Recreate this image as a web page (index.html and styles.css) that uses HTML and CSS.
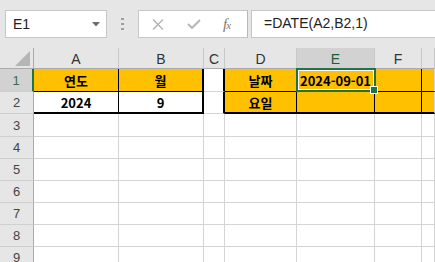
FILE: index.html
```html
<!DOCTYPE html>
<html lang="ko">
<head>
  <meta charset="UTF-8" />
  <title>DATE 함수</title>
  <link rel="stylesheet" href="styles.css">
</head>
<body>

  <div class="toolbar">
    <div class="namebox">
      <span>E1</span>
      <svg class="arrow" width="8" height="5" viewBox="0 0 8 5"><path d="M0 0h8L4 4.5z" fill="#6b6b6b"/></svg>
    </div>
    <div class="grip">
      <svg width="3" height="12" viewBox="0 0 3 12"><rect x="0" y="0" width="3" height="2" fill="#a0a0a0"/><rect x="0" y="5" width="3" height="2" fill="#a0a0a0"/><rect x="0" y="10" width="3" height="2" fill="#a0a0a0"/></svg>
    </div>
    <div class="fxbox">
      <svg class="ico-x" width="12" height="11" viewBox="0 0 12 11"><path d="M1 0.5l10 10M11 0.5l-10 10" stroke="#b3b3b3" stroke-width="1.4" fill="none"/></svg>
      <svg class="ico-ok" width="14" height="10" viewBox="0 0 14 10"><path d="M1 5l4 4 8-8" stroke="#b3b3b3" stroke-width="1.8" fill="none"/></svg>
      <span class="fx">f<sub>x</sub></span>
    </div>
    <div class="formula">=DATE(A2,B2,1)</div>
  </div>

  <div class="sheet">
    <!-- column headers -->
    <div class="corner"><svg width="15" height="15" viewBox="0 0 15 15"><path d="M15 0V15H0z" fill="#b5b5b5"/></svg></div>
    <div class="colhead">A</div>
    <div class="colhead">B</div>
    <div class="colhead">C</div>
    <div class="colhead">D</div>
    <div class="colhead active">E</div>
    <div class="colhead">F</div>
    <div class="colhead"></div>

    <!-- row 1 -->
    <div class="rowhead active">1</div>
    <div class="cell fill line-r line-b">연도</div>
    <div class="cell fill thick-r line-b">월</div>
    <div class="cell thick-r"></div>
    <div class="cell fill line-r line-b">날짜</div>
    <div class="cell fill line-r line-b current">2024-09-01<span class="select"><span class="handle"></span></span></div>
    <div class="cell fill line-r line-b"></div>
    <div class="cell fill line-b"></div>

    <!-- row 2 -->
    <div class="rowhead">2</div>
    <div class="cell line-r thick-b">2024</div>
    <div class="cell thick-r thick-b">9</div>
    <div class="cell thick-r"></div>
    <div class="cell fill line-r thick-b">요일</div>
    <div class="cell fill line-r thick-b"></div>
    <div class="cell fill line-r thick-b"></div>
    <div class="cell fill thick-b"></div>
  </div>

  <div class="sheet rest" id="rest"></div>

  <script>
    // empty rows 3..9
    const rest = document.getElementById('rest');
    let html = '';
    for (let r = 3; r <= 9; r++) {
      html += `<div class="rowhead">${r}</div>`;
      for (let c = 0; c < 7; c++) html += '<div class="cell"></div>';
    }
    rest.innerHTML = html;
  </script>
</body>
</html>
```

FILE: styles.css
```css
body {
  margin: 0;
  background: #fff;
  font-family: "Liberation Sans", "Noto Sans CJK KR", sans-serif;
  overflow: hidden;
}
.toolbar {
  background: #e6e6e6;
  height: 48px;
  box-sizing: border-box;
  padding: 10px 0 0 5px;
  display: flex;
  align-items: flex-start;
}
.namebox {
  width: 102px;
  height: 28px;
  box-sizing: border-box;
  background: #fff;
  border: 1px solid #c6c6c6;
  display: flex;
  align-items: center;
  justify-content: space-between;
  padding: 0 6px 0 7px;
  font-size: 14px;
  color: #222;
}
.namebox .arrow {
  margin-top: 1px;
}
.grip {
  width: 31px;
  height: 28px;
  display: flex;
  align-items: center;
  justify-content: center;
}
.fxbox {
  width: 110px;
  height: 28px;
  box-sizing: border-box;
  background: #fff;
  border: 1px solid #c6c6c6;
  border-right-color: #b8b8b8;
  display: flex;
  align-items: center;
  padding-left: 13px;
}
.ico-ok {
  margin-left: 23px;
}
.fx {
  margin-left: 22px;
  font-family: "Liberation Serif", serif;
  font-style: italic;
  font-size: 15px;
  color: #777;
}
.fx sub {
  font-size: 11px;
  vertical-align: 0;
  margin-left: -1px;
}
.formula {
  flex: 1;
  height: 28px;
  box-sizing: border-box;
  margin-left: 3px;
  background: #fff;
  border: 1px solid #c6c6c6;
  border-right: none;
  padding: 4px 0 0 12px;
  font-size: 14px;
  color: #222;
}

.sheet {
  display: grid;
  grid-template-columns: 34px 85px 85px 21px 72px 78px 47px 13px;
  grid-template-rows: 21px 23px 22px;
}
.sheet.rest {
  grid-template-rows: 23px;
  grid-auto-rows: 22px;
}
.sheet > div {
  box-sizing: border-box;
}
.corner {
  background: #e6e6e6;
  border-right: 1px solid #ababab;
  border-bottom: 1px solid #ababab;
  display: flex;
  align-items: flex-end;
  justify-content: flex-end;
  padding: 0 3px 2px 0;
}
.colhead {
  background: #e6e6e6;
  border-right: 1px solid #c8c8c8;
  border-bottom: 1px solid #ababab;
  display: flex;
  align-items: center;
  justify-content: center;
  font-size: 14px;
  color: #333;
  padding-top: 1px;
}
.colhead.active {
  background: #d2d2d2;
  color: #1e5c38;
}
.rowhead {
  background: #e6e6e6;
  border-right: 1px solid #ababab;
  border-bottom: 1px solid #cfcfcf;
  display: flex;
  align-items: center;
  justify-content: center;
  font-size: 13px;
  color: #444;
}
.rowhead.active {
  background: #d2d2d2;
  border-right: 2px solid #217346;
  color: #3c6a4d;
}
.cell {
  border-right: 1px solid #d4d4d4;
  border-bottom: 1px solid #d4d4d4;
  display: flex;
  align-items: center;
  justify-content: center;
  font-family: "Noto Sans CJK KR", sans-serif;
  font-weight: bold;
  font-size: 13px;
  color: #000;
}
.fill {
  background: #ffc000;
}
.line-r {
  border-right: 1px solid #000;
}
.line-b {
  border-bottom: 1px solid #000;
}
.thick-r {
  border-right: 2px solid #000;
}
.thick-b {
  border-bottom: 2px solid #000;
}
.current {
  position: relative;
}
.select {
  position: absolute;
  left: -1px;
  top: -1px;
  width: 80px;
  height: 24px;
  box-sizing: border-box;
  border: 2px solid #217346;
  box-shadow: inset 0 0 0 1px #fff;
}
.handle {
  position: absolute;
  right: -4px;
  bottom: -4px;
  width: 6px;
  height: 6px;
  background: #217346;
  border: 1px solid #fff;
}
```
